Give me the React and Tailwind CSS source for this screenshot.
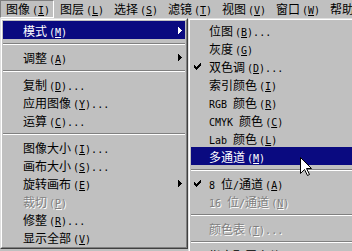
import React from 'react';

const cjk = /([\u3000-\u9fff\uff00-\uffef]+)/;

// split a label into CJK runs and half-width latin runs
const Txt = ({ s }) =>
  s.split(cjk).map((p, i) =>
    p === '' ? null : cjk.test(p) ? (
      <span key={i} className="font-['Noto_Sans_CJK_SC',sans-serif] text-[12px]">{p}</span>
    ) : (
      <span key={i} className="font-['DejaVu_Sans_Mono',monospace] text-[10px] whitespace-pre">{p}</span>
    )
  );

const Label = ({ label, k, dots }) => (
  <span className="whitespace-pre leading-[18px]">
    <Txt s={label} />
    <span className="font-['DejaVu_Sans_Mono',monospace] text-[10px] ml-[2px]">
      (<span className="underline">{k}</span>){dots ? '...' : ''}
    </span>
  </span>
);

const Check = () => (
  <svg width="7" height="7" viewBox="0 0 7 7" className="block" shapeRendering="crispEdges">
    <path d="M6 0h1v1H6zM5 1h2v1H5zM0 2h1v1H0zM4 2h3v1H4zM0 3h2v1H0zM3 3h3v1H3zM0 4h5v1H0zM1 5h3v1H1zM2 6h1v1H2z" fill="currentColor" />
  </svg>
);

const Arrow = () => (
  <svg width="4" height="7" viewBox="0 0 4 7" className="block" shapeRendering="crispEdges">
    <path d="M0 0h1v7H0zM1 1h1v5H1zM2 2h1v3H2zM3 3h1v1H3z" fill="currentColor" />
  </svg>
);

const Sep = () => (
  <div className="h-[9px] flex flex-col justify-center">
    <div className="h-px bg-[#808080]" />
    <div className="h-px bg-white" />
  </div>
);

const Item = ({ item, lead }) => {
  if (item.sep) return <Sep />;
  const cls = item.active
    ? 'bg-[#0a0a80] text-white'
    : item.off
    ? 'text-[#808080] [text-shadow:1px_1px_0_#fff]'
    : 'text-black';
  return (
    <div className={`h-[18px] flex items-center pr-[3px] ${cls}`}>
      <span className={`${lead} shrink-0 pl-[3px]`}>{item.check && <Check />}</span>
      <span className="flex-1">
        <Label label={item.label} k={item.k} dots={item.dots} />
      </span>
      {item.sub && <Arrow />}
    </div>
  );
};

const bar = [
  ['图像', 'I'],
  ['图层', 'L'],
  ['选择', 'S'],
  ['滤镜', 'T'],
  ['视图', 'V'],
  ['窗口', 'W'],
  ['帮助', 'H'],
];

const imageMenu = [
  { label: '模式', k: 'M', sub: true, active: true },
  { sep: true },
  { label: '调整', k: 'A', sub: true },
  { sep: true },
  { label: '复制', k: 'D', dots: true },
  { label: '应用图像', k: 'Y', dots: true },
  { label: '运算', k: 'C', dots: true },
  { sep: true },
  { label: '图像大小', k: 'I', dots: true },
  { label: '画布大小', k: 'S', dots: true },
  { label: '旋转画布', k: 'E', sub: true },
  { label: '裁切', k: 'P', off: true },
  { label: '修整', k: 'R', dots: true },
  { label: '显示全部', k: 'V' },
];

const modeMenu = [
  { label: '位图', k: 'B', dots: true },
  { label: '灰度', k: 'G' },
  { label: '双色调', k: 'D', dots: true, check: true },
  { label: '索引颜色', k: 'I' },
  { label: 'RGB 颜色', k: 'R' },
  { label: 'CMYK 颜色', k: 'C' },
  { label: 'Lab 颜色', k: 'L' },
  { label: '多通道', k: 'M', active: true },
  { sep: true },
  { label: '8 位/通道', k: 'A', check: true },
  { label: '16 位/通道', k: 'N', off: true },
  { sep: true },
  { label: '颜色表', k: 'T', dots: true, off: true },
  { sep: true },
  { label: '指定配置文件', k: 'P', dots: true },
];

const Panel = ({ className, children }) => (
  <div className={`border border-t-[#dfdfdf] border-l-[#dfdfdf] border-r-[#404040] border-b-[#404040] ${className}`}>
    <div className="border border-t-white border-l-white border-r-[#808080] border-b-[#808080] p-px">
      {children}
    </div>
  </div>
);

export default function App() {
  return (
    <div className="relative w-[352px] h-[251px] overflow-hidden bg-[#c0c0c0] text-black">
      <div className="flex h-[18px] whitespace-nowrap">
        {bar.map(([label, k], i) => (
          <div
            key={label}
            className={`w-[54px] shrink-0 h-[18px] flex items-center pl-[5px] border ${
              i === 0
                ? 'border-t-[#808080] border-l-[#808080] border-r-white border-b-white'
                : 'border-transparent'
            }`}
          >
            <Label label={label} k={k} />
          </div>
        ))}
      </div>

      <div className="flex items-start">
        <Panel className="w-[188px] shrink-0">
          {imageMenu.map((item, i) => (
            <Item key={i} item={item} lead="w-[20px]" />
          ))}
        </Panel>
        <Panel className="w-[200px] shrink-0">
          {modeMenu.map((item, i) => (
            <Item key={i} item={item} lead="w-[18px]" />
          ))}
        </Panel>
      </div>

      <svg className="absolute left-[300px] top-[157px]" width="12" height="19" viewBox="0 0 12 19">
        <path d="M0.5 0.5V16.5L4.5 12.5L7.5 18.5L9.5 17.5L6.5 11.5H11.5Z" fill="#fff" stroke="#000" strokeWidth="1" />
      </svg>
    </div>
  );
}
